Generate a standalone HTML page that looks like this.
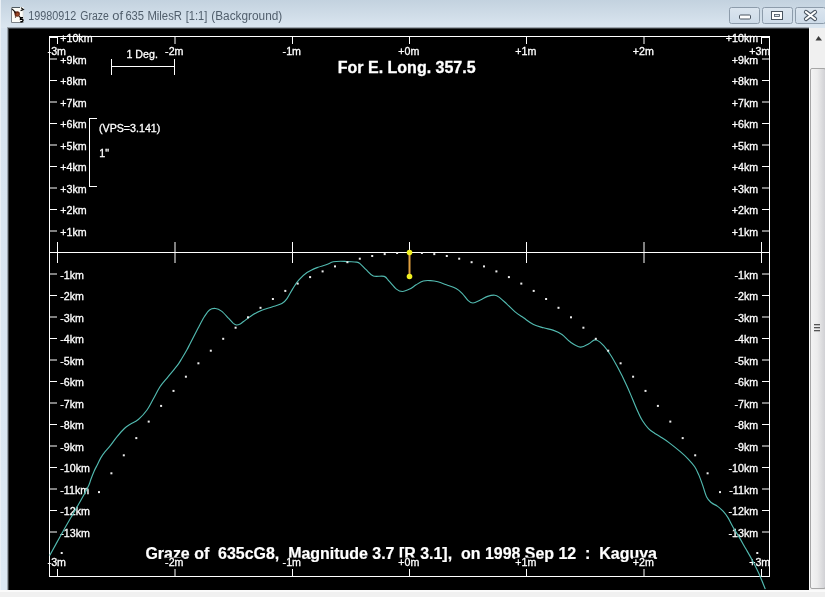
<!DOCTYPE html>
<html><head><meta charset="utf-8"><style>
html,body{margin:0;padding:0;background:#f0f0f0;overflow:hidden;}
svg{display:block;will-change:transform;}
text{font-family:"Liberation Sans",sans-serif;}
</style></head><body>
<svg width="825" height="597" viewBox="0 0 825 597">
<defs>
<linearGradient id="tb" x1="0" y1="0" x2="0" y2="1">
<stop offset="0" stop-color="#c3d2df"/><stop offset="1" stop-color="#dbe6f0"/>
</linearGradient>
<linearGradient id="lf" x1="0" y1="0" x2="0" y2="1">
<stop offset="0" stop-color="#d6e2ee"/><stop offset="1" stop-color="#dce8f3"/>
</linearGradient>
<linearGradient id="thumb" x1="0" y1="0" x2="1" y2="0">
<stop offset="0" stop-color="#f4f4f4"/><stop offset="0.45" stop-color="#ececec"/><stop offset="1" stop-color="#cfcfd3"/>
</linearGradient>
<linearGradient id="btn" x1="0" y1="0" x2="0" y2="1">
<stop offset="0" stop-color="#dbe5ef"/><stop offset="1" stop-color="#cddbe8"/>
</linearGradient>
</defs>
<rect x="0" y="0" width="825" height="597" fill="#f0f0f0"/>
<rect x="0" y="0" width="825" height="28" fill="url(#tb)"/>
<rect x="0" y="28" width="8" height="562" fill="url(#lf)"/>
<rect x="0" y="0" width="1" height="590" fill="#e9eff5"/>
<rect x="7" y="27" width="802" height="1" fill="#9ea6ae"/>
<rect x="7" y="27" width="1" height="563" fill="#9ea6ae"/>
<rect x="8" y="28" width="801" height="562" fill="#3a3e42"/>
<rect x="9" y="29" width="800" height="561" fill="#000"/>
<rect x="0" y="590" width="825" height="2" fill="#fafafa"/>

<rect x="809" y="28" width="16" height="562" fill="#f0f0f0"/>
<rect x="809" y="28" width="1" height="562" fill="#fdfdfd"/>
<path d="M815.5 40.5 L818.5 36 L822 40.5 Z" fill="#3a3a3a"/>
<rect x="810.5" y="68.5" width="15" height="520" rx="1.5" fill="url(#thumb)" stroke="#a6a6a6" stroke-width="1"/>
<rect x="814" y="324" width="6" height="1.3" fill="#555"/>
<rect x="814" y="327" width="6" height="1.3" fill="#555"/>
<rect x="814" y="330" width="6" height="1.3" fill="#555"/>

<rect x="729.5" y="7.5" width="30" height="16" rx="2" fill="url(#btn)" stroke="#8d9cab" stroke-width="1"/>
<rect x="762.5" y="7.5" width="30" height="16" rx="2" fill="url(#btn)" stroke="#8d9cab" stroke-width="1"/>
<rect x="795.5" y="7.5" width="30" height="16" rx="2" fill="url(#btn)" stroke="#8d9cab" stroke-width="1"/>
<rect x="739.5" y="15" width="11" height="4" rx="1" fill="#fff" stroke="#4a5561" stroke-width="1"/>
<rect x="771.5" y="11.5" width="11" height="8" fill="#fff" stroke="#4a5561" stroke-width="1"/><rect x="774.5" y="14.5" width="5" height="2" fill="#dde5ee" stroke="#4a5561" stroke-width="0.8"/>
<path d="M806 12 L815 19 M815 12 L806 19" stroke="#4a5561" stroke-width="4.2" stroke-linecap="round"/><path d="M806 12 L815 19 M815 12 L806 19" stroke="#fff" stroke-width="2.2" stroke-linecap="round"/>
<rect x="11" y="7" width="12.5" height="15.5" fill="#fdfdf8"/>
<path d="M11.5 7.5 L20 7.5" stroke="#505a60" stroke-width="1"/>
<path d="M11.5 8 L11.5 22.5 L23.5 22.5" stroke="#7c8288" stroke-width="1" fill="none"/>
<path d="M23.2 11 L23.2 22" stroke="#c8ccd0" stroke-width="0.8"/>
<path d="M21 7.6 L23.4 9.6 L20.6 10.6" stroke="#111" stroke-width="1.2" fill="none"/>
<path d="M12 8.8 L15.5 12.3" stroke="#111" stroke-width="1.2"/>
<circle cx="17.2" cy="14.0" r="2.7" fill="#6a2a16"/>
<circle cx="17.5" cy="14.4" r="1.3" fill="#a04a28"/>
<circle cx="15" cy="12.5" r="0.9" fill="#2a1008"/>
<circle cx="19.5" cy="16.8" r="0.8" fill="#2a1008"/>
<circle cx="15.5" cy="17" r="0.7" fill="#3a1a10"/>
<path d="M23 17.6 L20.6 17.6 L20.5 19.3 Q23.2 18.8 23 20.6 Q22.6 22 20.3 21.6" stroke="#000" stroke-width="1.4" fill="none"/>
<text x="28.3" y="19.6" font-size="12" fill="#505e6c" textLength="48.0" lengthAdjust="spacingAndGlyphs">19980912</text>
<text x="80.3" y="19.6" font-size="12" fill="#505e6c" textLength="28.4" lengthAdjust="spacingAndGlyphs">Graze</text>
<text x="112.3" y="19.6" font-size="12" fill="#505e6c" textLength="10.8" lengthAdjust="spacingAndGlyphs">of</text>
<text x="125.4" y="19.6" font-size="12" fill="#505e6c" textLength="18.7" lengthAdjust="spacingAndGlyphs">635</text>
<text x="147.4" y="19.6" font-size="12" fill="#505e6c" textLength="34.6" lengthAdjust="spacingAndGlyphs">MilesR</text>
<text x="185.7" y="19.6" font-size="12" fill="#505e6c" textLength="21.6" lengthAdjust="spacingAndGlyphs">[1:1]</text>
<text x="211.3" y="19.6" font-size="12" fill="#505e6c" textLength="71.0" lengthAdjust="spacingAndGlyphs">(Background)</text>
<text x="406.70" y="72.80" font-size="16" font-weight="bold" fill="#fff" stroke="#fff" stroke-width="0.3" text-anchor="middle">For E. Long. 357.5</text>
<text xml:space="preserve" x="145.4" y="558.8" font-size="16" font-weight="bold" fill="#fff" stroke="#fff" stroke-width="0.2" textLength="511.5" lengthAdjust="spacingAndGlyphs">Graze of  635cG8,  Magnitude 3.7 [R 3.1],  on 1998 Sep 12  :  Kaguya</text>
<rect x="60.30" y="227.05" width="26.39" height="11.2" fill="#000"/><text x="60.30" y="235.65" font-size="10.67" font-weight="normal" fill="#fff" stroke="#fff" stroke-width="0.3" text-anchor="start">+1km</text>
<rect x="731.71" y="227.05" width="26.39" height="11.2" fill="#000"/><text x="758.10" y="235.65" font-size="10.67" font-weight="normal" fill="#fff" stroke="#fff" stroke-width="0.3" text-anchor="end">+1km</text>
<rect x="60.30" y="205.55" width="26.39" height="11.2" fill="#000"/><text x="60.30" y="214.15" font-size="10.67" font-weight="normal" fill="#fff" stroke="#fff" stroke-width="0.3" text-anchor="start">+2km</text>
<rect x="731.71" y="205.55" width="26.39" height="11.2" fill="#000"/><text x="758.10" y="214.15" font-size="10.67" font-weight="normal" fill="#fff" stroke="#fff" stroke-width="0.3" text-anchor="end">+2km</text>
<rect x="60.30" y="184.05" width="26.39" height="11.2" fill="#000"/><text x="60.30" y="192.65" font-size="10.67" font-weight="normal" fill="#fff" stroke="#fff" stroke-width="0.3" text-anchor="start">+3km</text>
<rect x="731.71" y="184.05" width="26.39" height="11.2" fill="#000"/><text x="758.10" y="192.65" font-size="10.67" font-weight="normal" fill="#fff" stroke="#fff" stroke-width="0.3" text-anchor="end">+3km</text>
<rect x="60.30" y="162.55" width="26.39" height="11.2" fill="#000"/><text x="60.30" y="171.15" font-size="10.67" font-weight="normal" fill="#fff" stroke="#fff" stroke-width="0.3" text-anchor="start">+4km</text>
<rect x="731.71" y="162.55" width="26.39" height="11.2" fill="#000"/><text x="758.10" y="171.15" font-size="10.67" font-weight="normal" fill="#fff" stroke="#fff" stroke-width="0.3" text-anchor="end">+4km</text>
<rect x="60.30" y="141.05" width="26.39" height="11.2" fill="#000"/><text x="60.30" y="149.65" font-size="10.67" font-weight="normal" fill="#fff" stroke="#fff" stroke-width="0.3" text-anchor="start">+5km</text>
<rect x="731.71" y="141.05" width="26.39" height="11.2" fill="#000"/><text x="758.10" y="149.65" font-size="10.67" font-weight="normal" fill="#fff" stroke="#fff" stroke-width="0.3" text-anchor="end">+5km</text>
<rect x="60.30" y="119.55" width="26.39" height="11.2" fill="#000"/><text x="60.30" y="128.15" font-size="10.67" font-weight="normal" fill="#fff" stroke="#fff" stroke-width="0.3" text-anchor="start">+6km</text>
<rect x="731.71" y="119.55" width="26.39" height="11.2" fill="#000"/><text x="758.10" y="128.15" font-size="10.67" font-weight="normal" fill="#fff" stroke="#fff" stroke-width="0.3" text-anchor="end">+6km</text>
<rect x="60.30" y="98.05" width="26.39" height="11.2" fill="#000"/><text x="60.30" y="106.65" font-size="10.67" font-weight="normal" fill="#fff" stroke="#fff" stroke-width="0.3" text-anchor="start">+7km</text>
<rect x="731.71" y="98.05" width="26.39" height="11.2" fill="#000"/><text x="758.10" y="106.65" font-size="10.67" font-weight="normal" fill="#fff" stroke="#fff" stroke-width="0.3" text-anchor="end">+7km</text>
<rect x="60.30" y="76.55" width="26.39" height="11.2" fill="#000"/><text x="60.30" y="85.15" font-size="10.67" font-weight="normal" fill="#fff" stroke="#fff" stroke-width="0.3" text-anchor="start">+8km</text>
<rect x="731.71" y="76.55" width="26.39" height="11.2" fill="#000"/><text x="758.10" y="85.15" font-size="10.67" font-weight="normal" fill="#fff" stroke="#fff" stroke-width="0.3" text-anchor="end">+8km</text>
<rect x="60.30" y="55.05" width="26.39" height="11.2" fill="#000"/><text x="60.30" y="63.65" font-size="10.67" font-weight="normal" fill="#fff" stroke="#fff" stroke-width="0.3" text-anchor="start">+9km</text>
<rect x="731.71" y="55.05" width="26.39" height="11.2" fill="#000"/><text x="758.10" y="63.65" font-size="10.67" font-weight="normal" fill="#fff" stroke="#fff" stroke-width="0.3" text-anchor="end">+9km</text>
<rect x="60.30" y="33.55" width="32.32" height="11.2" fill="#000"/><text x="60.30" y="42.15" font-size="10.67" font-weight="normal" fill="#fff" stroke="#fff" stroke-width="0.3" text-anchor="start">+10km</text>
<rect x="725.78" y="33.55" width="32.32" height="11.2" fill="#000"/><text x="758.10" y="42.15" font-size="10.67" font-weight="normal" fill="#fff" stroke="#fff" stroke-width="0.3" text-anchor="end">+10km</text>
<rect x="60.30" y="528.05" width="29.64" height="11.2" fill="#000"/><text x="60.30" y="536.65" font-size="10.67" font-weight="normal" fill="#fff" stroke="#fff" stroke-width="0.3" text-anchor="start">-13km</text>
<rect x="728.46" y="528.05" width="29.64" height="11.2" fill="#000"/><text x="758.10" y="536.65" font-size="10.67" font-weight="normal" fill="#fff" stroke="#fff" stroke-width="0.3" text-anchor="end">-13km</text>
<rect x="60.30" y="506.55" width="29.64" height="11.2" fill="#000"/><text x="60.30" y="515.15" font-size="10.67" font-weight="normal" fill="#fff" stroke="#fff" stroke-width="0.3" text-anchor="start">-12km</text>
<rect x="728.46" y="506.55" width="29.64" height="11.2" fill="#000"/><text x="758.10" y="515.15" font-size="10.67" font-weight="normal" fill="#fff" stroke="#fff" stroke-width="0.3" text-anchor="end">-12km</text>
<rect x="60.30" y="485.05" width="29.64" height="11.2" fill="#000"/><text x="60.30" y="493.65" font-size="10.67" font-weight="normal" fill="#fff" stroke="#fff" stroke-width="0.3" text-anchor="start">-11km</text>
<rect x="728.46" y="485.05" width="29.64" height="11.2" fill="#000"/><text x="758.10" y="493.65" font-size="10.67" font-weight="normal" fill="#fff" stroke="#fff" stroke-width="0.3" text-anchor="end">-11km</text>
<rect x="60.30" y="463.55" width="29.64" height="11.2" fill="#000"/><text x="60.30" y="472.15" font-size="10.67" font-weight="normal" fill="#fff" stroke="#fff" stroke-width="0.3" text-anchor="start">-10km</text>
<rect x="728.46" y="463.55" width="29.64" height="11.2" fill="#000"/><text x="758.10" y="472.15" font-size="10.67" font-weight="normal" fill="#fff" stroke="#fff" stroke-width="0.3" text-anchor="end">-10km</text>
<rect x="60.30" y="442.05" width="23.71" height="11.2" fill="#000"/><text x="60.30" y="450.65" font-size="10.67" font-weight="normal" fill="#fff" stroke="#fff" stroke-width="0.3" text-anchor="start">-9km</text>
<rect x="734.39" y="442.05" width="23.71" height="11.2" fill="#000"/><text x="758.10" y="450.65" font-size="10.67" font-weight="normal" fill="#fff" stroke="#fff" stroke-width="0.3" text-anchor="end">-9km</text>
<rect x="60.30" y="420.55" width="23.71" height="11.2" fill="#000"/><text x="60.30" y="429.15" font-size="10.67" font-weight="normal" fill="#fff" stroke="#fff" stroke-width="0.3" text-anchor="start">-8km</text>
<rect x="734.39" y="420.55" width="23.71" height="11.2" fill="#000"/><text x="758.10" y="429.15" font-size="10.67" font-weight="normal" fill="#fff" stroke="#fff" stroke-width="0.3" text-anchor="end">-8km</text>
<rect x="60.30" y="399.05" width="23.71" height="11.2" fill="#000"/><text x="60.30" y="407.65" font-size="10.67" font-weight="normal" fill="#fff" stroke="#fff" stroke-width="0.3" text-anchor="start">-7km</text>
<rect x="734.39" y="399.05" width="23.71" height="11.2" fill="#000"/><text x="758.10" y="407.65" font-size="10.67" font-weight="normal" fill="#fff" stroke="#fff" stroke-width="0.3" text-anchor="end">-7km</text>
<rect x="60.30" y="377.55" width="23.71" height="11.2" fill="#000"/><text x="60.30" y="386.15" font-size="10.67" font-weight="normal" fill="#fff" stroke="#fff" stroke-width="0.3" text-anchor="start">-6km</text>
<rect x="734.39" y="377.55" width="23.71" height="11.2" fill="#000"/><text x="758.10" y="386.15" font-size="10.67" font-weight="normal" fill="#fff" stroke="#fff" stroke-width="0.3" text-anchor="end">-6km</text>
<rect x="60.30" y="356.05" width="23.71" height="11.2" fill="#000"/><text x="60.30" y="364.65" font-size="10.67" font-weight="normal" fill="#fff" stroke="#fff" stroke-width="0.3" text-anchor="start">-5km</text>
<rect x="734.39" y="356.05" width="23.71" height="11.2" fill="#000"/><text x="758.10" y="364.65" font-size="10.67" font-weight="normal" fill="#fff" stroke="#fff" stroke-width="0.3" text-anchor="end">-5km</text>
<rect x="60.30" y="334.55" width="23.71" height="11.2" fill="#000"/><text x="60.30" y="343.15" font-size="10.67" font-weight="normal" fill="#fff" stroke="#fff" stroke-width="0.3" text-anchor="start">-4km</text>
<rect x="734.39" y="334.55" width="23.71" height="11.2" fill="#000"/><text x="758.10" y="343.15" font-size="10.67" font-weight="normal" fill="#fff" stroke="#fff" stroke-width="0.3" text-anchor="end">-4km</text>
<rect x="60.30" y="313.05" width="23.71" height="11.2" fill="#000"/><text x="60.30" y="321.65" font-size="10.67" font-weight="normal" fill="#fff" stroke="#fff" stroke-width="0.3" text-anchor="start">-3km</text>
<rect x="734.39" y="313.05" width="23.71" height="11.2" fill="#000"/><text x="758.10" y="321.65" font-size="10.67" font-weight="normal" fill="#fff" stroke="#fff" stroke-width="0.3" text-anchor="end">-3km</text>
<rect x="60.30" y="291.55" width="23.71" height="11.2" fill="#000"/><text x="60.30" y="300.15" font-size="10.67" font-weight="normal" fill="#fff" stroke="#fff" stroke-width="0.3" text-anchor="start">-2km</text>
<rect x="734.39" y="291.55" width="23.71" height="11.2" fill="#000"/><text x="758.10" y="300.15" font-size="10.67" font-weight="normal" fill="#fff" stroke="#fff" stroke-width="0.3" text-anchor="end">-2km</text>
<rect x="60.30" y="270.05" width="23.71" height="11.2" fill="#000"/><text x="60.30" y="278.65" font-size="10.67" font-weight="normal" fill="#fff" stroke="#fff" stroke-width="0.3" text-anchor="start">-1km</text>
<rect x="734.39" y="270.05" width="23.71" height="11.2" fill="#000"/><text x="758.10" y="278.65" font-size="10.67" font-weight="normal" fill="#fff" stroke="#fff" stroke-width="0.3" text-anchor="end">-1km</text>
<rect x="47.61" y="46.70" width="18.37" height="11.2" fill="#000"/><text x="56.80" y="55.30" font-size="10.67" font-weight="normal" fill="#fff" stroke="#fff" stroke-width="0.3" text-anchor="middle">-3m</text>
<rect x="47.61" y="557.60" width="18.37" height="11.2" fill="#000"/><text x="56.80" y="566.20" font-size="10.67" font-weight="normal" fill="#fff" stroke="#fff" stroke-width="0.3" text-anchor="middle">-3m</text>
<rect x="165.11" y="46.70" width="18.37" height="11.2" fill="#000"/><text x="174.30" y="55.30" font-size="10.67" font-weight="normal" fill="#fff" stroke="#fff" stroke-width="0.3" text-anchor="middle">-2m</text>
<rect x="165.11" y="557.60" width="18.37" height="11.2" fill="#000"/><text x="174.30" y="566.20" font-size="10.67" font-weight="normal" fill="#fff" stroke="#fff" stroke-width="0.3" text-anchor="middle">-2m</text>
<rect x="282.61" y="46.70" width="18.37" height="11.2" fill="#000"/><text x="291.80" y="55.30" font-size="10.67" font-weight="normal" fill="#fff" stroke="#fff" stroke-width="0.3" text-anchor="middle">-1m</text>
<rect x="282.61" y="557.60" width="18.37" height="11.2" fill="#000"/><text x="291.80" y="566.20" font-size="10.67" font-weight="normal" fill="#fff" stroke="#fff" stroke-width="0.3" text-anchor="middle">-1m</text>
<rect x="398.27" y="46.70" width="21.05" height="11.2" fill="#000"/><text x="408.80" y="55.30" font-size="10.67" font-weight="normal" fill="#fff" stroke="#fff" stroke-width="0.3" text-anchor="middle">+0m</text>
<rect x="398.27" y="557.60" width="21.05" height="11.2" fill="#000"/><text x="408.80" y="566.20" font-size="10.67" font-weight="normal" fill="#fff" stroke="#fff" stroke-width="0.3" text-anchor="middle">+0m</text>
<rect x="515.27" y="46.70" width="21.05" height="11.2" fill="#000"/><text x="525.80" y="55.30" font-size="10.67" font-weight="normal" fill="#fff" stroke="#fff" stroke-width="0.3" text-anchor="middle">+1m</text>
<rect x="515.27" y="557.60" width="21.05" height="11.2" fill="#000"/><text x="525.80" y="566.20" font-size="10.67" font-weight="normal" fill="#fff" stroke="#fff" stroke-width="0.3" text-anchor="middle">+1m</text>
<rect x="632.77" y="46.70" width="21.05" height="11.2" fill="#000"/><text x="643.30" y="55.30" font-size="10.67" font-weight="normal" fill="#fff" stroke="#fff" stroke-width="0.3" text-anchor="middle">+2m</text>
<rect x="632.77" y="557.60" width="21.05" height="11.2" fill="#000"/><text x="643.30" y="566.20" font-size="10.67" font-weight="normal" fill="#fff" stroke="#fff" stroke-width="0.3" text-anchor="middle">+2m</text>
<rect x="749.15" y="46.70" width="21.05" height="11.2" fill="#000"/><text x="770.20" y="55.30" font-size="10.67" font-weight="normal" fill="#fff" stroke="#fff" stroke-width="0.3" text-anchor="end">+3m</text>
<rect x="749.15" y="557.60" width="21.05" height="11.2" fill="#000"/><text x="770.20" y="566.20" font-size="10.67" font-weight="normal" fill="#fff" stroke="#fff" stroke-width="0.3" text-anchor="end">+3m</text>
<g shape-rendering="crispEdges" stroke="#fff" stroke-width="1" fill="none">
<rect x="49.5" y="36.5" width="720" height="540"/>
<line x1="50" y1="252.5" x2="769" y2="252.5"/>
</g><g stroke="#fff" stroke-width="1" fill="none">
<line x1="57.5" y1="37" x2="57.5" y2="44"/>
<line x1="57.5" y1="569" x2="57.5" y2="576"/>
<line x1="57.5" y1="242" x2="57.5" y2="263"/>
<line x1="175.0" y1="37" x2="175.0" y2="44"/>
<line x1="175.0" y1="569" x2="175.0" y2="576"/>
<line x1="175.0" y1="242" x2="175.0" y2="263"/>
<line x1="292.5" y1="37" x2="292.5" y2="44"/>
<line x1="292.5" y1="569" x2="292.5" y2="576"/>
<line x1="292.5" y1="242" x2="292.5" y2="263"/>
<line x1="409.5" y1="37" x2="409.5" y2="44"/>
<line x1="409.5" y1="569" x2="409.5" y2="576"/>
<line x1="409.5" y1="242" x2="409.5" y2="263"/>
<line x1="526.5" y1="37" x2="526.5" y2="44"/>
<line x1="526.5" y1="569" x2="526.5" y2="576"/>
<line x1="526.5" y1="242" x2="526.5" y2="263"/>
<line x1="644.0" y1="37" x2="644.0" y2="44"/>
<line x1="644.0" y1="569" x2="644.0" y2="576"/>
<line x1="644.0" y1="242" x2="644.0" y2="263"/>
<line x1="761.5" y1="37" x2="761.5" y2="44"/>
<line x1="761.5" y1="569" x2="761.5" y2="576"/>
<line x1="761.5" y1="242" x2="761.5" y2="263"/>
<line x1="50" y1="231.0" x2="57" y2="231.0"/>
<line x1="762" y1="231.0" x2="769" y2="231.0"/>
<line x1="50" y1="209.5" x2="57" y2="209.5"/>
<line x1="762" y1="209.5" x2="769" y2="209.5"/>
<line x1="50" y1="188.0" x2="57" y2="188.0"/>
<line x1="762" y1="188.0" x2="769" y2="188.0"/>
<line x1="50" y1="166.5" x2="57" y2="166.5"/>
<line x1="762" y1="166.5" x2="769" y2="166.5"/>
<line x1="50" y1="145.0" x2="57" y2="145.0"/>
<line x1="762" y1="145.0" x2="769" y2="145.0"/>
<line x1="50" y1="123.5" x2="57" y2="123.5"/>
<line x1="762" y1="123.5" x2="769" y2="123.5"/>
<line x1="50" y1="102.0" x2="57" y2="102.0"/>
<line x1="762" y1="102.0" x2="769" y2="102.0"/>
<line x1="50" y1="80.5" x2="57" y2="80.5"/>
<line x1="762" y1="80.5" x2="769" y2="80.5"/>
<line x1="50" y1="59.0" x2="57" y2="59.0"/>
<line x1="762" y1="59.0" x2="769" y2="59.0"/>
<line x1="50" y1="37.5" x2="57" y2="37.5"/>
<line x1="762" y1="37.5" x2="769" y2="37.5"/>
<line x1="50" y1="532.0" x2="57" y2="532.0"/>
<line x1="762" y1="532.0" x2="769" y2="532.0"/>
<line x1="50" y1="510.5" x2="57" y2="510.5"/>
<line x1="762" y1="510.5" x2="769" y2="510.5"/>
<line x1="50" y1="489.0" x2="57" y2="489.0"/>
<line x1="762" y1="489.0" x2="769" y2="489.0"/>
<line x1="50" y1="467.5" x2="57" y2="467.5"/>
<line x1="762" y1="467.5" x2="769" y2="467.5"/>
<line x1="50" y1="446.0" x2="57" y2="446.0"/>
<line x1="762" y1="446.0" x2="769" y2="446.0"/>
<line x1="50" y1="424.5" x2="57" y2="424.5"/>
<line x1="762" y1="424.5" x2="769" y2="424.5"/>
<line x1="50" y1="403.0" x2="57" y2="403.0"/>
<line x1="762" y1="403.0" x2="769" y2="403.0"/>
<line x1="50" y1="381.5" x2="57" y2="381.5"/>
<line x1="762" y1="381.5" x2="769" y2="381.5"/>
<line x1="50" y1="360.0" x2="57" y2="360.0"/>
<line x1="762" y1="360.0" x2="769" y2="360.0"/>
<line x1="50" y1="338.5" x2="57" y2="338.5"/>
<line x1="762" y1="338.5" x2="769" y2="338.5"/>
<line x1="50" y1="317.0" x2="57" y2="317.0"/>
<line x1="762" y1="317.0" x2="769" y2="317.0"/>
<line x1="50" y1="295.5" x2="57" y2="295.5"/>
<line x1="762" y1="295.5" x2="769" y2="295.5"/>
<line x1="50" y1="274.0" x2="57" y2="274.0"/>
<line x1="762" y1="274.0" x2="769" y2="274.0"/>
</g><g shape-rendering="crispEdges" stroke="#fff" stroke-width="1" fill="none">
<line x1="111" y1="66.5" x2="175" y2="66.5"/>
<line x1="111.5" y1="59" x2="111.5" y2="75"/>
<line x1="174.5" y1="59" x2="174.5" y2="75"/>
<polyline points="97,118.5 89.5,118.5 89.5,186.5 97,186.5"/>
</g>
<text x="142.20" y="58.00" font-size="10.67" font-weight="normal" fill="#fff" stroke="#fff" stroke-width="0.3" text-anchor="middle">1 Deg.</text>
<text x="99.00" y="131.60" font-size="10.67" font-weight="normal" fill="#fff" stroke="#fff" stroke-width="0.3" text-anchor="start">(VPS=3.141)</text>
<text x="99.30" y="156.60" font-size="10.67" font-weight="normal" fill="#fff" stroke="#fff" stroke-width="0.3" text-anchor="start">1&quot;</text>
<path d="M49.7 555.5 C51.5 552.3 56.9 542.3 60.3 536.2 C63.7 530.1 66.6 525.0 70.2 518.8 C73.8 512.6 78.6 504.4 81.7 498.8 C84.8 493.2 87.3 488.4 88.8 485.2 C90.3 481.9 90.0 481.7 90.9 479.3 C91.8 476.9 93.1 473.5 94.2 471.0 C95.3 468.5 96.5 466.5 97.6 464.3 C98.7 462.1 99.7 459.7 100.9 457.6 C102.2 455.5 103.6 453.6 105.1 451.7 C106.6 449.8 108.1 448.4 110.1 445.9 C112.1 443.4 114.5 439.8 116.9 436.9 C119.3 434.0 122.2 430.6 124.4 428.5 C126.6 426.4 127.9 425.8 130.3 424.3 C132.7 422.8 135.8 421.7 138.6 419.3 C141.4 416.9 144.5 413.4 147.0 410.0 C149.5 406.6 151.2 402.7 153.4 398.8 C155.6 394.9 157.6 390.5 160.0 386.8 C162.4 383.1 165.1 380.4 168.0 376.8 C170.9 373.2 175.1 368.5 177.4 365.4 C179.8 362.3 180.5 360.6 182.1 358.0 C183.7 355.4 185.4 352.5 186.8 350.0 C188.2 347.5 188.4 346.9 190.3 343.2 C192.2 339.5 196.1 332.0 198.4 327.6 C200.7 323.2 202.5 319.7 204.3 316.8 C206.2 313.9 207.6 311.4 209.5 310.0 C211.4 308.6 213.5 308.3 215.5 308.5 C217.5 308.7 219.3 309.5 221.5 311.1 C223.7 312.7 226.5 316.1 228.5 318.2 C230.5 320.2 232.0 322.3 233.3 323.4 C234.7 324.5 235.4 324.9 236.6 325.0 C237.8 325.1 239.0 324.6 240.2 324.0 C241.4 323.4 241.7 322.9 243.6 321.5 C245.5 320.1 248.8 317.3 251.8 315.4 C254.8 313.5 258.5 311.7 261.8 310.3 C265.1 308.9 268.5 308.1 271.9 307.0 C275.2 305.9 279.4 305.0 281.9 303.6 C284.4 302.2 285.2 301.1 287.0 298.6 C288.8 296.1 290.9 291.7 292.8 288.6 C294.8 285.5 296.3 282.9 298.7 280.2 C301.1 277.5 303.9 274.7 307.0 272.6 C310.1 270.5 313.9 268.9 317.1 267.6 C320.3 266.3 323.4 265.8 326.1 264.8 C328.8 263.8 330.9 262.4 333.3 261.8 C335.7 261.2 338.2 261.2 340.6 261.2 C343.0 261.2 345.3 261.5 347.9 261.6 C350.5 261.8 354.4 261.8 356.4 262.1 C358.4 262.4 358.4 262.3 360.0 263.6 C361.6 264.9 363.9 267.6 366.1 269.7 C368.3 271.8 370.3 274.9 373.3 276.0 C376.3 277.1 381.6 275.5 384.2 276.4 C386.8 277.3 387.1 279.1 389.1 281.2 C391.1 283.3 394.2 287.4 396.4 289.1 C398.6 290.8 400.2 291.5 402.4 291.5 C404.6 291.5 407.4 290.2 409.7 289.1 C412.0 288.0 413.8 286.2 416.1 284.8 C418.4 283.4 420.9 281.7 423.3 281.0 C425.7 280.3 428.2 280.5 430.6 280.6 C433.0 280.7 435.3 281.1 437.9 281.8 C440.5 282.5 443.4 283.7 446.4 284.8 C449.4 285.9 453.5 287.1 456.1 288.5 C458.7 289.9 460.1 291.3 462.1 293.3 C464.1 295.3 466.4 299.0 468.2 300.6 C470.0 302.2 471.0 303.1 473.0 303.0 C475.0 302.9 477.9 301.1 480.3 300.0 C482.7 298.9 485.2 297.2 487.6 296.4 C490.0 295.6 492.8 295.0 494.8 295.2 C496.8 295.4 497.7 296.2 499.7 297.6 C501.7 299.1 504.1 301.5 506.7 303.9 C509.3 306.3 512.3 309.6 515.1 311.9 C517.9 314.2 520.4 315.7 523.5 317.8 C526.6 319.9 530.1 322.8 533.5 324.5 C536.9 326.2 540.2 326.8 543.6 327.8 C547.0 328.8 550.5 329.3 553.6 330.4 C556.7 331.5 559.2 332.6 562.0 334.5 C564.8 336.4 567.3 340.0 570.4 342.1 C573.5 344.2 577.3 346.8 580.4 347.1 C583.5 347.4 586.4 345.0 588.8 343.8 C591.2 342.6 592.8 339.8 595.0 339.8 C597.2 339.9 599.6 341.7 602.1 344.1 C604.6 346.5 607.4 350.2 610.1 354.2 C612.8 358.2 615.5 363.3 618.2 368.3 C620.9 373.3 623.9 379.4 626.2 384.4 C628.6 389.4 630.3 393.8 632.3 398.5 C634.3 403.2 636.6 408.9 638.3 412.6 C640.0 416.3 640.8 418.1 642.5 420.8 C644.2 423.5 646.5 426.5 648.5 428.6 C650.5 430.7 652.4 431.8 654.5 433.2 C656.6 434.6 658.6 435.6 661.0 437.2 C663.4 438.8 665.8 440.2 669.0 442.6 C672.2 445.0 676.8 448.7 680.0 451.4 C683.2 454.1 685.5 456.2 688.0 458.8 C690.5 461.4 692.9 464.1 694.7 466.8 C696.5 469.5 697.4 471.8 698.8 474.9 C700.1 478.0 701.5 481.9 702.8 485.6 C704.1 489.3 705.3 494.4 706.8 497.3 C708.2 500.2 709.8 501.3 711.5 502.8 C713.2 504.3 715.3 504.7 717.3 506.1 C719.3 507.5 721.5 509.5 723.3 511.4 C725.0 513.3 726.2 514.8 727.8 517.4 C729.4 520.0 730.9 523.5 732.8 526.8 C734.7 530.1 737.1 533.7 739.3 537.4 C741.5 541.1 743.6 545.0 745.8 548.8 C748.0 552.6 750.1 556.1 752.3 560.2 C754.5 564.3 756.6 568.4 758.8 573.2 C761.0 578.0 764.2 586.5 765.3 589.1" fill="none" stroke="#52bab0" stroke-width="1.15"/>
<g fill="#ececec">
<rect x="60.7" y="552.0" width="2" height="2"/>
<rect x="98.0" y="491.1" width="2" height="2"/>
<rect x="110.4" y="472.3" width="2" height="2"/>
<rect x="122.8" y="454.3" width="2" height="2"/>
<rect x="135.3" y="437.1" width="2" height="2"/>
<rect x="147.7" y="420.6" width="2" height="2"/>
<rect x="160.1" y="404.9" width="2" height="2"/>
<rect x="172.5" y="389.9" width="2" height="2"/>
<rect x="184.9" y="375.7" width="2" height="2"/>
<rect x="197.4" y="362.3" width="2" height="2"/>
<rect x="209.8" y="349.7" width="2" height="2"/>
<rect x="222.2" y="337.8" width="2" height="2"/>
<rect x="234.6" y="326.7" width="2" height="2"/>
<rect x="247.0" y="316.3" width="2" height="2"/>
<rect x="259.5" y="306.8" width="2" height="2"/>
<rect x="271.9" y="298.0" width="2" height="2"/>
<rect x="284.3" y="289.9" width="2" height="2"/>
<rect x="296.7" y="282.6" width="2" height="2"/>
<rect x="309.1" y="276.1" width="2" height="2"/>
<rect x="321.6" y="270.4" width="2" height="2"/>
<rect x="334.0" y="265.4" width="2" height="2"/>
<rect x="346.4" y="261.2" width="2" height="2"/>
<rect x="358.8" y="257.7" width="2" height="2"/>
<rect x="371.2" y="255.0" width="2" height="2"/>
<rect x="383.7" y="253.1" width="2" height="2"/>
<rect x="396.1" y="252.0" width="2" height="2"/>
<rect x="408.5" y="251.6" width="2" height="2"/>
<rect x="420.9" y="252.0" width="2" height="2"/>
<rect x="433.3" y="253.1" width="2" height="2"/>
<rect x="445.8" y="255.0" width="2" height="2"/>
<rect x="458.2" y="257.7" width="2" height="2"/>
<rect x="470.6" y="261.2" width="2" height="2"/>
<rect x="483.0" y="265.4" width="2" height="2"/>
<rect x="495.4" y="270.4" width="2" height="2"/>
<rect x="507.9" y="276.1" width="2" height="2"/>
<rect x="520.3" y="282.6" width="2" height="2"/>
<rect x="532.7" y="289.9" width="2" height="2"/>
<rect x="545.1" y="298.0" width="2" height="2"/>
<rect x="557.5" y="306.8" width="2" height="2"/>
<rect x="570.0" y="316.3" width="2" height="2"/>
<rect x="582.4" y="326.7" width="2" height="2"/>
<rect x="594.8" y="337.8" width="2" height="2"/>
<rect x="607.2" y="349.7" width="2" height="2"/>
<rect x="619.6" y="362.3" width="2" height="2"/>
<rect x="632.1" y="375.7" width="2" height="2"/>
<rect x="644.5" y="389.9" width="2" height="2"/>
<rect x="656.9" y="404.9" width="2" height="2"/>
<rect x="669.3" y="420.6" width="2" height="2"/>
<rect x="681.7" y="437.1" width="2" height="2"/>
<rect x="694.2" y="454.3" width="2" height="2"/>
<rect x="706.6" y="472.3" width="2" height="2"/>
<rect x="719.0" y="491.1" width="2" height="2"/>
<rect x="756.3" y="552.0" width="2" height="2"/>
</g>
<line x1="409.5" y1="252.5" x2="409.5" y2="276.5" stroke="#e0a040" stroke-width="2"/>
<circle cx="409.5" cy="252.5" r="2.8" fill="#f0f020"/>
<circle cx="409.5" cy="276.5" r="2.8" fill="#f0f020"/>
</svg></body></html>
